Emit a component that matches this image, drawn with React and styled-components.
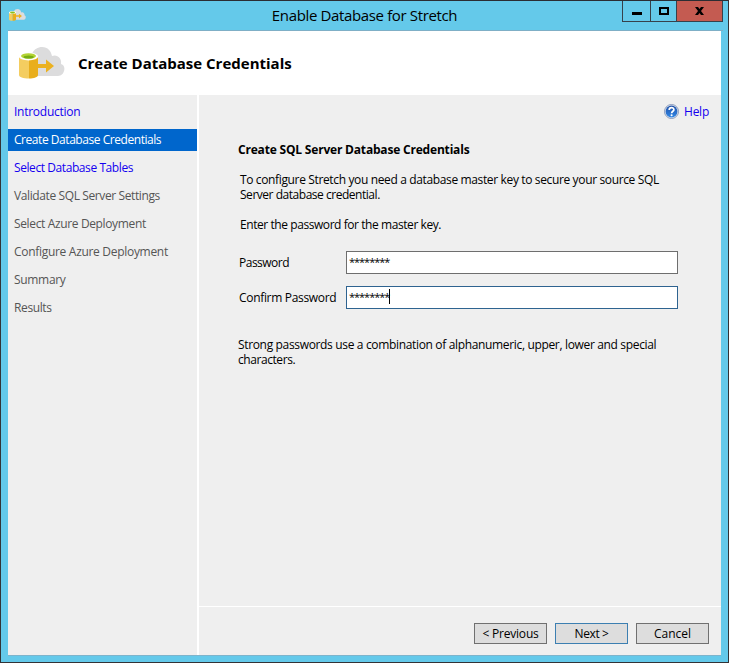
import React from 'react';
import styled, { createGlobalStyle } from 'styled-components';

const GlobalStyle = createGlobalStyle`
  * { box-sizing: border-box; }
  body {
    margin: 0;
    overflow: hidden;
    font: 12px/15px "Open Sans", "Noto Sans", sans-serif;
    color: #000;
  }
`;

const Window = styled.div`
  width: 729px;
  height: 663px;
  border: 1px solid #333336;
  border-top-color: #2b2d33;
  padding: 0 7px 7px;
  background: #64c9ea;
  display: flex;
  flex-direction: column;
`;

const TitleBar = styled.header`
  height: 30px;
  flex: none;
  display: grid;
  grid-template-columns: 101px 1fr 101px;
  align-items: start;
  margin-right: -2px;
  border-bottom: 1px solid #7fafc6;
`;

const TitleIcon = styled.span`
  display: block;
  padding: 8px 0 0 1px;
  line-height: 0;
`;

const Title = styled.h1`
  margin: 0 0 0 -2px;
  padding-top: 3px;
  text-align: center;
  font-size: 15px;
  line-height: 22px;
  font-weight: 400;
  letter-spacing: -0.36px;
`;

const Controls = styled.div`
  display: flex;
  height: 21px;
  border: 1px solid #36414b;
  border-top: 0;
`;

const Control = styled.button`
  width: ${({ $width }) => $width}px;
  height: 20px;
  padding: 0;
  border: 0;
  border-left: ${({ $divided }) => ($divided ? '1px solid #36414b' : '0')};
  background: ${({ $danger }) => ($danger ? '#c45b51' : 'transparent')};
  line-height: 0;
`;

const Client = styled.div`
  flex: 1;
  display: flex;
  flex-direction: column;
  background: #efefef;
  border-bottom: 1px solid #7db4cc;
  margin-bottom: -1px;
`;

const Banner = styled.div`
  height: 64px;
  flex: none;
  display: flex;
  align-items: center;
  padding-left: 11px;
  background: #fff;
`;

const BannerTitle = styled.h2`
  margin: 0 0 0 13px;
  font-size: 15px;
  line-height: 20px;
  font-weight: 700;
  letter-spacing: 0;
`;

const Body = styled.div`
  flex: 1;
  display: grid;
  grid-template-columns: 191px 1fr;
`;

const Steps = styled.nav`
  border-right: 2px solid #fff;
  padding-top: 6px;
  display: flex;
  flex-direction: column;
  gap: 6px;
`;

const stepColors = { link: '#1400f0', current: '#fff', disabled: '#555' };

const Step = styled.div`
  height: 22px;
  padding-left: 6px;
  line-height: 22px;
  white-space: nowrap;
  color: ${({ $state }) => stepColors[$state]};
  background: ${({ $state }) => ($state === 'current' ? '#0066cc' : 'transparent')};
  letter-spacing: ${({ $track }) => $track}px;
`;

const Main = styled.main`
  display: flex;
  flex-direction: column;
`;

const HelpLink = styled.div`
  display: flex;
  align-items: center;
  justify-content: flex-end;
  gap: 5px;
  height: 17px;
  margin: 8px 12px 0 0;
  color: #1400f0;
  letter-spacing: -0.25px;
`;

const Page = styled.section`
  flex: 1;
  padding: 22px 43px 0 39px;
`;

const Heading = styled.h3`
  margin: 0;
  font-size: 12px;
  line-height: 15px;
  font-weight: 700;
  letter-spacing: -0.19px;
`;

const Text = styled.p`
  margin: ${({ $gap }) => $gap}px 0 0 ${({ $indent }) => $indent || 0}px;
  white-space: nowrap;
  letter-spacing: ${({ $track = -0.34 }) => $track}px;
`;

const Line = styled.span`
  display: block;
  letter-spacing: ${({ $track }) => $track}px;
`;

const Field = styled.label`
  display: grid;
  grid-template-columns: 107px 332px;
  align-items: center;
  height: 23px;
  margin: ${({ $gap }) => $gap}px 0 0 1px;
  letter-spacing: ${({ $track }) => $track}px;
`;

const PasswordBox = styled.span`
  height: 23px;
  display: flex;
  align-items: flex-start;
  padding: 1px 0 0 2px;
  border: 1px solid ${({ $focused }) => ($focused ? '#2e6390' : '#6e6e6e')};
  background: #fff;
  font-size: 11px;
  line-height: 18px;
  letter-spacing: -1.02px;
`;

const Caret = styled.i`
  width: 1px;
  height: 15px;
  margin-top: 1px;
  background: #000;
`;

const Footer = styled.footer`
  height: 49px;
  border-top: 1px solid #fff;
  padding: 16px 12px 0 0;
  display: flex;
  justify-content: flex-end;
  gap: 8px;
`;

const Button = styled.button`
  width: 73px;
  height: 21px;
  padding: 1px 0 0;
  border: 1px solid ${({ $primary }) => ($primary ? '#3c7fb1' : '#707070')};
  background: #dddddd;
  color: #000;
  font: inherit;
  line-height: 18px;
  letter-spacing: ${({ $track = 0 }) => $track}px;
`;

const StretchIcon = ({ width, height }) => (
  <svg width={width} height={height} viewBox="0 0 46 32">
    <path
      d="M13 25V7C15 2 19 0 23 0c6 0 9 4 10 9 5-2 10 2 9 8 3 1 4 4 3 7-1 4-4 5-7 5H13Z"
      fill="#dcdcdd"
    />
    <path d="M0 10v18c0 2 4 3.500 10 3.500V10Z" fill="#f4cd60" />
    <path d="M10 10v21.500c5 0 9-1.500 9-3.500V10Z" fill="#e9ae1c" />
    <ellipse cx="9.500" cy="9.500" rx="9.700" ry="3.900" fill="#fff" />
    <ellipse cx="9.500" cy="9" rx="7.500" ry="2.800" fill="#b4d334" />
    <ellipse cx="9.700" cy="10" rx="5" ry="1.500" fill="#76ae13" />
    <path d="M19 17h8v-4.500l8 6.500-8 6.500V21h-8Z" fill="#ebb11f" />
  </svg>
);

const HelpIcon = () => (
  <svg width="15" height="15" viewBox="0 0 15 15">
    <defs>
      <linearGradient id="help" x1="0" y1="0" x2="0" y2="1">
        <stop offset="0" stopColor="#1f50a8" />
        <stop offset="1" stopColor="#3288e6" />
      </linearGradient>
    </defs>
    <circle cx="7.500" cy="7.500" r="7" fill="#e3e8f0" stroke="#7f92b5" strokeWidth=".9" />
    <circle cx="7.500" cy="7.500" r="5.900" fill="url(#help)" />
    <path d="M5.200 6C5.200 2.800 9.900 3 9.900 5.700 9.900 7.300 7.600 7.200 7.600 9.200" fill="none" stroke="#fff" strokeWidth="1.700" />
    <circle cx="7.600" cy="11.200" r="1.050" fill="#fff" />
  </svg>
);

const steps = [
  ['Introduction', 'link', -0.26],
  ['Create Database Credentials', 'current', -0.45],
  ['Select Database Tables', 'link', -0.42],
  ['Validate SQL Server Settings', 'disabled', -0.39],
  ['Select Azure Deployment', 'disabled', -0.36],
  ['Configure Azure Deployment', 'disabled', -0.3],
  ['Summary', 'disabled', -0.32],
  ['Results', 'disabled', -0.38],
];

export default function App() {
  return (
    <>
      <GlobalStyle />
      <Window>
        <TitleBar>
          <TitleIcon><StretchIcon width={17} height={12} /></TitleIcon>
          <Title>Enable Database for Stretch</Title>
          <Controls>
            <Control $width={27} aria-label="Minimize">
              <svg width="26" height="20"><path d="M8 11h10v3H8Z" /></svg>
            </Control>
            <Control $width={26} $divided aria-label="Maximize">
              <svg width="25" height="20">
                <path d="M9 7h8v6H9Z" fill="none" stroke="#000" strokeWidth="2" />
              </svg>
            </Control>
            <Control $width={46} $divided $danger aria-label="Close">
              <svg width="45" height="20">
                <path d="M18 6h3l1.500 2L24 6h3l-3 4 3 4h-3l-1.500-2-1.500 2h-3l3-4Z" />
              </svg>
            </Control>
          </Controls>
        </TitleBar>
        <Client>
          <Banner>
            <StretchIcon width={46} height={32} />
            <BannerTitle>Create Database Credentials</BannerTitle>
          </Banner>
          <Body>
            <Steps>
              {steps.map(([label, state, track]) => (
                <Step key={label} $state={state} $track={track}>{label}</Step>
              ))}
            </Steps>
            <Main>
              <HelpLink><HelpIcon />Help</HelpLink>
              <Page>
                <Heading>Create SQL Server Database Credentials</Heading>
                <Text $gap={15} $indent={2}>
                  <Line $track={-0.36}>To configure Stretch you need a database master key to secure your source SQL</Line>
                  <Line $track={-0.47}>Server database credential.</Line>
                </Text>
                <Text $gap={15} $indent={2} $track={-0.43}>Enter the password for the master key.</Text>
                <Field $gap={19} $track={-0.5}>
                  Password
                  <PasswordBox>********</PasswordBox>
                </Field>
                <Field $gap={12} $track={-0.32}>
                  Confirm Password
                  <PasswordBox $focused>********<Caret /></PasswordBox>
                </Field>
                <Text $gap={28}>
                  <Line $track={-0.34}>Strong passwords use a combination of alphanumeric, upper, lower and special</Line>
                  <Line $track={-0.43}>characters.</Line>
                </Text>
              </Page>
              <Footer>
                <Button $track={-0.2}>&lt; Previous</Button>
                <Button $primary $track={-0.4}>Next &gt;</Button>
                <Button>Cancel</Button>
              </Footer>
            </Main>
          </Body>
        </Client>
      </Window>
    </>
  );
}
